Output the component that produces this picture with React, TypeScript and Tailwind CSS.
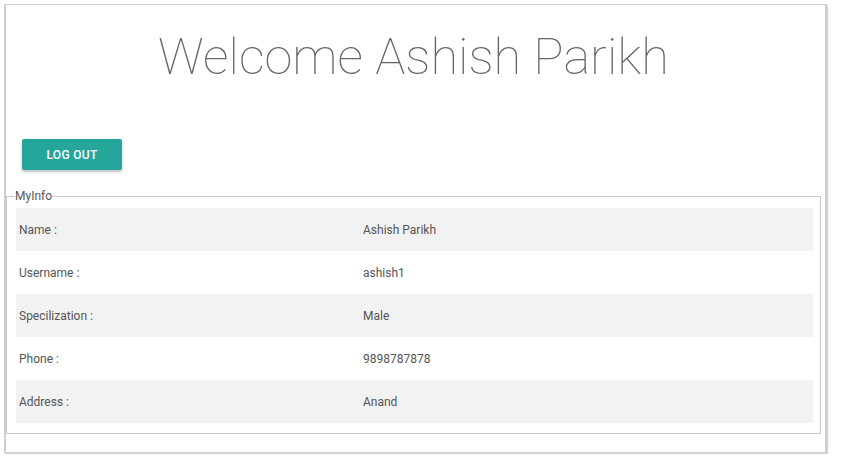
const rows = [
  { label: 'Name :', value: 'Ashish Parikh' },
  { label: 'Username :', value: 'ashish1' },
  { label: 'Specilization :', value: 'Male' },
  { label: 'Phone :', value: '9898787878' },
  { label: 'Address :', value: 'Anand' },
];

export default function App() {
  return (
    <div className="w-[843px] h-[467px] bg-white pt-[4px] pl-[4px] font-['Roboto',sans-serif]">
      {/* Outer card */}
      <div className="w-[823px] h-[449px] border border-[#cfcfcf] border-l-2 border-r-2 shadow-[1px_1px_1px_#d6d6d6] flex flex-col">
        <h1 className="mt-[22px] text-center text-[50.5px] leading-[60px] font-thin text-[#666] pr-[4px]">
          Welcome Ashish Parikh
        </h1>

        <div className="mt-[52px] pl-[16px]">
          <button className="w-[100px] h-[31px] rounded-[2px] bg-[#26a69a] text-white text-[12px] font-medium tracking-[0.3px] shadow-[0_2px_3px_rgba(0,0,0,0.25)]">
            LOG OUT
          </button>
        </div>

        <fieldset className="mt-[19px] w-[815px] border border-[#c8c8c8] pl-[9px] pr-[7px] pb-[10px] pt-[5px]">
          <legend className="text-[12px] text-[#555] leading-[14px] px-0 ml-[-1px]">MyInfo</legend>
          <div className="flex flex-col">
            {rows.map((r, i) => (
              <div
                key={r.label}
                className={`flex items-center h-[43px] text-[12px] text-[#555] ${i % 2 === 0 ? 'bg-[#f2f2f2]' : 'bg-white'}`}
              >
                <span className="w-[347px] pl-[3px]">{r.label}</span>
                <span>{r.value}</span>
              </div>
            ))}
          </div>
        </fieldset>
      </div>
    </div>
  );
}
